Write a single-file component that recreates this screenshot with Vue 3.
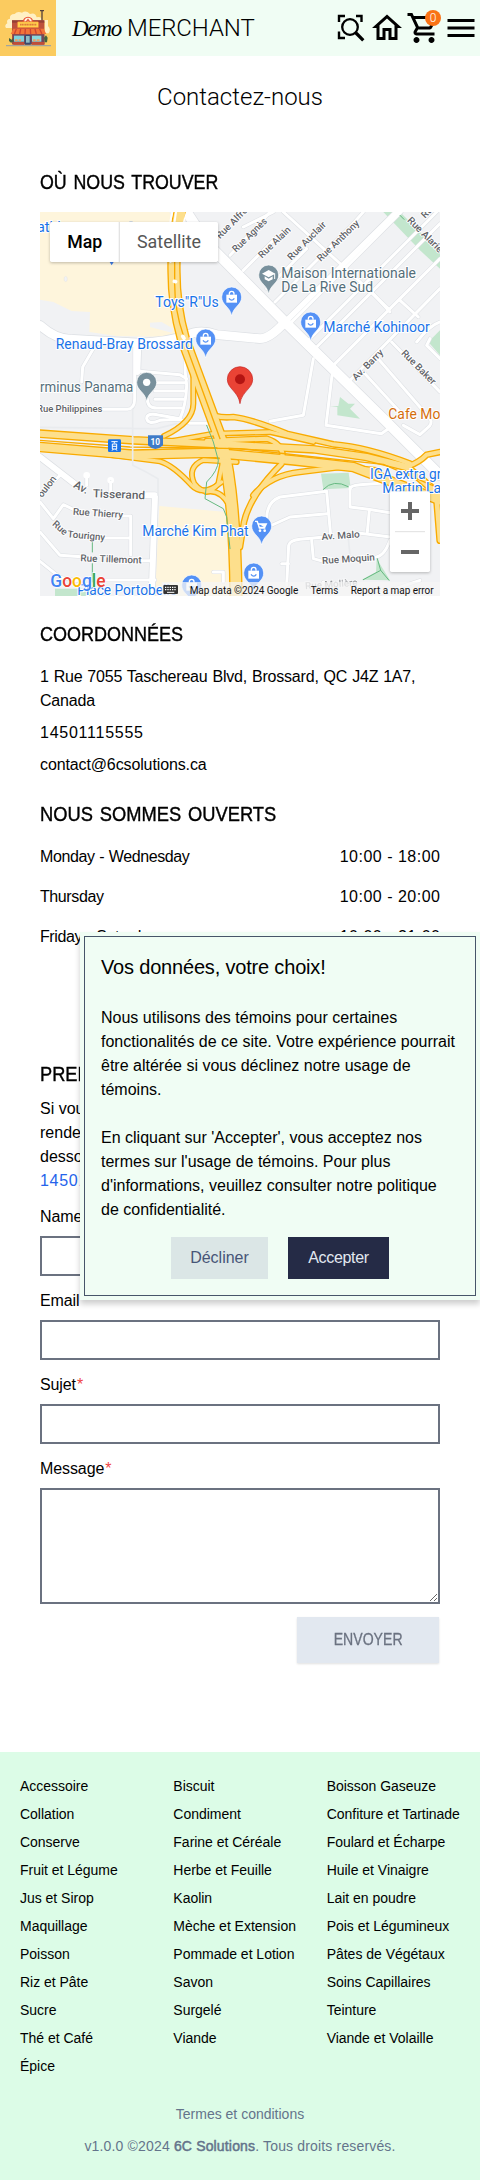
<script setup>
const hours = [
  { day: 'Monday - Wednesday', time: '10:00 - 18:00' },
  { day: 'Thursday', time: '10:00 - 20:00' },
  { day: 'Friday - Saturday', time: '10:00 - 21:00' },
]
const categories = [
  'Accessoire', 'Biscuit', 'Boisson Gaseuze',
  'Collation', 'Condiment', 'Confiture et Tartinade',
  'Conserve', 'Farine et Céréale', 'Foulard et Écharpe',
  'Fruit et Légume', 'Herbe et Feuille', 'Huile et Vinaigre',
  'Jus et Sirop', 'Kaolin', 'Lait en poudre',
  'Maquillage', 'Mèche et Extension', 'Pois et Légumineux',
  'Poisson', 'Pommade et Lotion', 'Pâtes de Végétaux',
  'Riz et Pâte', 'Savon', 'Soins Capillaires',
  'Sucre', 'Surgelé', 'Teinture',
  'Thé et Café', 'Viande', 'Viande et Volaille',
  'Épice',
]
const fields = ['Name', 'Email', 'Sujet']

// Map geometry, drawn on a 1200 x 1152 canvas
const minorRoads = [
  'M160 410 L128 465 L125 510',
  'M300 478 L420 488 L440 500', 'M340 512 H436', 'M345 537 H436', 'M345 562 H430',
  'M322 560 Q322 588 350 588 H425',
  'M435 440 Q434 480 440 520 Q438 580 420 620 L360 610 Q320 600 320 620 Q325 640 360 625 L420 622 L450 634 H505',
  'M190 592 H262 Q284 590 284 560 V400',
  'M0 870 L40 920 L70 878 L100 892', 'M250 912 H272 V1028', 'M190 978 H270', 'M0 960 L60 1030 L125 1034',
  'M0 1048 L60 1096 L110 1106', 'M190 1104 H345', 'M300 1046 H330',
  'M60 790 L0 850', 'M140 820 V790', 'M212 840 V810',
  'M820 440 L790 610 L690 628', 'M876 490 L858 640 L1024 665 L1045 650',
  'M680 920 Q680 870 720 855 L860 838 L872 970', 'M690 942 L750 915 L862 905',
  'M740 1120 L746 1000 Q750 985 780 982 L845 976', 'M815 985 L820 1040 L850 1048', 'M725 1055 H745',
  'M930 825 V885 L985 892 L1050 902', 'M930 832 Q930 820 960 818 L1040 812', 'M988 895 L982 960',
  'M960 964 L1052 975', 'M1000 1035 Q1030 1040 1050 985',
  'M610 175 L710 75', 'M680 230 L800 110', 'M705 270 L930 45 L970 0',
  'M570 130 L690 0', 'M750 335 L1084 0', 'M805 385 L1190 0', 'M830 405 L1200 35', 'M880 460 L1200 140',
  'M925 510 L1200 230', 'M700 0 L610 45', 'M1170 380 L1160 400 L1200 440', 'M1200 330 Q1170 340 1130 390',
  'M730 0 L950 200 L1045 290', 'M990 235 L1050 300', 'M1080 265 L1135 315',
  'M1055 390 L1200 540', 'M1010 435 L1170 620 Q1180 635 1160 650 L1140 668 L1090 640', 'M970 480 L1080 600',
  'M840 1152 L850 1110', 'M1000 1152 L1140 1105', 'M520 1080 H550 V1110',
]
const majorRoads = [
  { d: 'M0 340 Q50 385 100 382 L300 393 Q380 390 440 370 Q480 350 530 368 L660 380 Q690 380 735 330', w: 26 },
  { d: 'M440 0 L500 92 L735 330 L1025 615 L1200 790', w: 30 },
  { d: 'M295 395 L292 480', w: 18 },
  { d: 'M0 735 L110 820 M320 850 H345 L335 1152', w: 18 },
  { d: 'M735 330 L1090 -20', w: 16 },
]
const highways = [
  { d: 'M420 0 Q400 90 402 180 Q402 280 430 380 L545 690 Q585 850 588 1152', w: 34 },
  { d: 'M0 665 L280 685 L600 700 L820 712 L980 735 L1100 765 L1200 850', w: 20 },
  { d: 'M0 705 L280 728 L520 722 L760 745 L940 765 L1200 865', w: 26 },
  { d: 'M172 724 L360 748 Q400 760 455 820 Q490 855 545 810', w: 12 },
  { d: 'M372 672 Q460 630 460 575 V470', w: 12 },
  { d: 'M380 690 L520 665 L690 660 L820 690', w: 12 },
  { d: 'M510 600 Q525 620 580 615 Q630 620 740 665 L880 697 Q980 705 1110 755', w: 14 },
  { d: 'M500 687 L680 680 Q740 700 725 755 Q630 850 612 930 L600 1005', w: 14 },
  { d: 'M590 750 L490 744 Q440 765 463 815 Q500 860 535 815 L548 750', w: 12 },
  { d: 'M498 840 Q540 830 568 880', w: 12 },
  { d: 'M640 850 Q690 790 780 780 L900 765 L1010 775', w: 14 },
  { d: 'M1100 765 Q1140 750 1160 728 L1200 720', w: 14 },
  { d: 'M1190 860 L1200 985', w: 16 },
]
const streetLabels = [
  { t: 'Rue Alfred', x: 540, y: 82, r: -45, w: 0 },
  { t: 'Rue Agnès', x: 588, y: 122, r: -44, w: 132 },
  { t: 'Rue Alain', x: 666, y: 140, r: -44, w: 122 },
  { t: 'Rue Auclair', x: 754, y: 146, r: -45, w: 150 },
  { t: 'Rue Anthony', x: 842, y: 150, r: -44, w: 164 },
  { t: 'Rue Alarie', x: 1100, y: 26, r: 45, w: 138 },
  { t: 'Rue', x: 1155, y: 20, r: -45, w: 0 },
  { t: 'Av. Barry', x: 948, y: 507, r: -45, w: 118 },
  { t: 'Rue Baker', x: 1082, y: 425, r: 45, w: 134 },
  { t: 'Rue Philippines', x: -9, y: 600, r: 0, w: 196 },
  { t: 'Rue Thierry', x: 98, y: 908, r: 4, w: 151 },
  { t: 'Rue Tillemont', x: 121, y: 1048, r: 2, w: 184 },
  { t: 'Av. Malo', x: 845, y: 984, r: -4, w: 115 },
  { t: 'Rue Moquin', x: 847, y: 1056, r: -4, w: 158 },
  { t: 'oulon', x: 6, y: 858, r: -52, w: 0 },
]
const pins = [
  { x: 575, y: 255, kind: 'bag', c: '#5491f5' },
  { x: 497, y: 381, kind: 'bag', c: '#5491f5' },
  { x: 812, y: 330, kind: 'bag', c: '#5491f5' },
  { x: 641, y: 1083, kind: 'bag', c: '#5491f5' },
  { x: 455, y: 1119, kind: 'bag', c: '#5491f5' },
  { x: 665, y: 942, kind: 'cart', c: '#5491f5' },
  { x: 686, y: 189, kind: 'school', c: '#78909c' },
  { x: 320, y: 511, kind: 'dot', c: '#78909c' },
]
</script>

<template>
  <div class="page">
    <header class="topbar">
      <svg class="logo" viewBox="0 0 168 168">
        <rect width="168" height="168" fill="#fbcb5f" />
        <path d="M18 84 Q12 76 22 70 Q18 58 30 56 Q28 42 44 42 Q52 32 66 38 Q78 30 90 42 Q106 36 110 52 Q124 48 126 60 H144 V78 Q154 88 146 100 H134 V66 H38 V84 Z" fill="#fff0c4" />
        <path d="M120 32 H132 M126 33 V64" stroke="#54413b" stroke-width="4" />
        <rect x="36" y="61" width="97" height="72" fill="#bd503c" />
        <rect x="36" y="61" width="97" height="7" fill="#943f36" />
        <circle cx="84" cy="66" r="16" fill="#eb5035" /><circle cx="84" cy="64" r="11" fill="#fff3df" />
        <path d="M77 68 l7-9 7 9" stroke="#e05535" stroke-width="4" fill="none" />
        <rect x="52" y="65" width="64" height="18" rx="3" fill="#ffd14d" stroke="#e96a31" stroke-width="2" />
        <path d="M60 74 H109" stroke="#de7c3b" stroke-width="5" stroke-dasharray="4 1" />
        <path d="M40 86 H131 L139 102 H32 Z" fill="#f27338" />
        <path d="M49 87 L43 102 M62 87 L59 102 M76 87 L75 102 M91 87 L92 102 M105 87 L109 102 M119 87 L126 102" stroke="#cf4430" stroke-width="4" />
        <rect x="38" y="103" width="95" height="30" fill="#74485a" />
        <rect x="42" y="107" width="30" height="18" fill="#7ed1dc" /><rect x="96" y="107" width="28" height="18" fill="#8bd8de" />
        <path d="M45 121 h8 m3 0 h7 M99 121 h8 m3 0 h9" stroke="#ed9f63" stroke-width="6" />
        <rect x="75" y="105" width="17" height="29" fill="#384a70" /><rect x="78" y="108" width="11" height="20" fill="#8fbbc4" />
        <path d="M27 114 l8 5 5-6 v12 l-7 3 -6-5 Z M132 113 l6-7 5 7 -2 14 h-7 Z" fill="#436241" />
        <path d="M40 126 H72 V134 H40 Z M96 126 H133 V134 H96 Z" fill="#c04c38" />
        <path d="M18 135 H153 V139 H18 Z" fill="#a2a59d" />
      </svg>
      <div class="brand"><span class="script">Demo</span><span class="merchant">MERCHANT</span></div>
      <nav class="actions">
        <svg class="icon" viewBox="0 0 36 36" fill="none" stroke="#000">
          <path d="M7 12V6H13 M24 6H29.5V12 M7 21.5V28H13" stroke-width="2.4" />
          <circle cx="18" cy="17" r="7.8" stroke-width="2.3" />
          <path d="M23.5 22.5 L31.3 30.3" stroke-width="3.3" />
        </svg>
        <svg class="icon" viewBox="0 0 24 24"><path d="M12 5.69l5 4.5V18h-2v-6H9v6H7v-7.81l5-4.5M12 3L2 12h3v8h6v-6h2v6h6v-8h3L12 3z" /></svg>
        <div class="cart">
          <svg class="icon" viewBox="0 0 24 24"><path d="M15.55 13c.75 0 1.41-.41 1.75-1.03l3.58-6.49c.37-.66-.11-1.48-.87-1.48H5.21l-.94-2H1v2h2l3.6 7.59-1.35 2.44C4.52 15.37 5.48 17 7 17h12v-2H7l1.1-2h7.45zM6.16 6h12.15l-2.76 5H8.53L6.16 6zM7 18c-1.1 0-1.99.9-1.99 2S5.9 22 7 22s2-.9 2-2-.9-2-2-2zm10 0c-1.1 0-1.99.9-1.99 2s.89 2 1.99 2 2-.9 2-2-.9-2-2-2z" /></svg>
          <span class="badge">0</span>
        </div>
        <svg class="icon" viewBox="0 0 24 24"><path d="M3 18h18v-2H3v2zm0-5h18v-2H3v2zm0-7v2h18V6H3z" /></svg>
      </nav>
    </header>

    <main class="content">
      <h1>Contactez-nous</h1>

      <h2 class="h-where">OÙ NOUS TROUVER</h2>
      <svg class="map" viewBox="0 0 1200 1152">
        <rect width="1200" height="1152" fill="#f1f2f4" />
        <path d="M0 0 H388 L415 60 V375 L230 372 L148 360 L150 300 L95 297 L40 270 L0 263 Z" fill="#fef5dc" />
        <path d="M358 882 L560 900 L572 1152 H345 Z" fill="#fef5dc" />
        <path d="M330 332 L365 330 L400 350 L395 362 L330 345 Z" fill="#f1f2f4" />
        <ellipse cx="77" cy="201" rx="5" ry="8" fill="#f1f2f4" stroke="#ddd" />
        <g fill="#c3e6cd">
          <path d="M1030 0 H1080 L1200 120 V170 L1140 115 Z" /><path d="M1165 390 L1200 355 V430 Z" />
          <path d="M900 555 L925 575 L945 575 L930 590 L960 620 L892 610 L892 585 L870 582 H895 Z" />
          <path d="M843 785 L926 782 L932 828 L850 832 Z" /><path d="M1010 1040 L1050 1105 L965 1103 L1008 1080 Z" /><path d="M45 1130 H165 V1152 H45 Z" />
        </g>
        <g fill="none" stroke-linecap="round" stroke-linejoin="round">
          <path v-for="d in minorRoads" :key="'a' + d" :d="d" stroke="#dcdfe3" stroke-width="12" />
          <path v-for="r in majorRoads" :key="'b' + r.d" :d="r.d" stroke="#dcdfe3" :stroke-width="r.w + 4" />
          <path v-for="d in minorRoads" :key="'c' + d" :d="d" stroke="#fff" stroke-width="9" />
          <path v-for="r in majorRoads" :key="'d' + r.d" :d="r.d" stroke="#fff" :stroke-width="r.w" />
          <circle cx="140" cy="790" r="6" stroke="#fff" stroke-width="8" /><circle cx="212" cy="805" r="6" stroke="#fff" stroke-width="8" />
          <path v-for="r in highways" :key="'e' + r.d" :d="r.d" stroke="#f9ab00" :stroke-width="r.w + 6" />
          <path v-for="r in highways" :key="'f' + r.d" :d="r.d" stroke="#fddf8c" :stroke-width="r.w - 2" />
          <path d="M404 150 V200 Q402 290 430 370 M438 400 L540 680 M0 685 L270 705 L600 710 L850 738 L1030 757 L1200 830" stroke="#f9ab00" stroke-width="4" />
          <path d="M0 646 L350 650 L410 635 M278 592 V760 Q320 780 354 800 V850 M925 980 L930 1030" stroke="#e9ebee" stroke-width="5" />
          <path d="M397 0 Q380 70 392 150 M408 0 L403 35 M441 0 L430 35" stroke="#fff" stroke-width="6" />
          <path d="M403 208 l4 1 M428 373 l4 6" stroke="#fff" stroke-width="11" />
          <path d="M500 640 L520 690 L535 745 Q535 775 500 810 L495 860 L550 890 L560 915 L570 1010 M157 985 V1020 M157 1055 V1110 M850 832 Q880 800 925 824 M970 1103 L1022 1075 L1012 1040 M1022 1075 L1047 1105 M1080 10 L1092 22" stroke="#66b981" stroke-width="3" />
        </g>

        <g class="street">
          <text v-for="s in streetLabels" :key="s.t + s.x" :x="s.x" :y="s.y" :transform="`rotate(${s.r} ${s.x} ${s.y})`" :textLength="s.w || null" lengthAdjust="spacingAndGlyphs">{{ s.t }}</text>
          <text x="35" y="938" transform="rotate(42 35 938)">Rue</text>
          <text x="82" y="976" transform="rotate(5 82 976)" textLength="113" lengthAdjust="spacingAndGlyphs">Tourigny</text>
          <text x="98" y="825" class="avenue" transform="rotate(28 98 825)">Av.</text>
          <text x="158" y="856" class="avenue" transform="rotate(2 158 856)" textLength="157" lengthAdjust="spacingAndGlyphs">Tisserand</text>
          <text x="796" y="1132" transform="rotate(-4 796 1132)" textLength="158" opacity=".6" lengthAdjust="spacingAndGlyphs">Rue Molière</text>
        </g>

        <g v-for="p in pins" :key="p.x" :transform="`translate(${p.x} ${p.y})`">
          <path d="M0 57 C-5 28-30 25-30 0 A30 30 0 0 1 30 0 C30 25 5 28 0 57 Z" :fill="p.c" stroke="#fff" stroke-width="2" />
          <g v-if="p.kind === 'bag'">
            <path d="M-16-7 H16 V17 H-16 Z" fill="#fff" /><path d="M-7-7 V-10 A7 7 0 0 1 7-10 V-7" fill="none" stroke="#fff" stroke-width="4" />
            <path d="M-8 4 Q0 15 8 4" fill="none" :stroke="p.c" stroke-width="4" />
          </g>
          <g v-else-if="p.kind === 'cart'">
            <path d="M-20-14 H-13 L-7 6 H11 M-11-6 H14 L9 4 H-7 Z" fill="#fff" stroke="#fff" stroke-width="4" /><circle cx="-5" cy="14" r="4" fill="#fff" /><circle cx="9" cy="14" r="4" fill="#fff" />
          </g>
          <g v-else-if="p.kind === 'school'">
            <path d="M-20-4 L0-15 L20-4 L0 7 Z M-12 4 L0 11 L12 4 V13 L0 19 L-12 13 Z" fill="#fff" /><path d="M18-4 V12" stroke="#fff" stroke-width="3" />
          </g>
          <circle v-else r="11" fill="#fff" />
        </g>
        <g>
          <path d="M600 575 C595 538 562 530 562 502 A38 38 0 0 1 638 502 C638 530 605 538 600 575 Z" fill="#ea4335" stroke="#c5221f" stroke-width="2" />
          <circle cx="600" cy="502" r="15" fill="#b31412" />
        </g>
        <path d="M324 670 H369 V700 Q346 722 324 700 Z" fill="#3f7bc8" />
        <text x="346" y="699" class="shield">10</text>
        <rect x="204" y="682" width="39" height="38" rx="4" fill="#1a73e8" />
        <path d="M214 689 H233 M223 689 V694 M217 696 H230 V711 H217 Z M217 703 H230 M216 716 L220 711 M231 716 L227 711" fill="none" stroke="#fff" stroke-width="3" />

        <g class="poi">
          <text x="346" y="285" textLength="190" lengthAdjust="spacingAndGlyphs">Toys"R"Us</text>
          <text x="47" y="411" textLength="412" lengthAdjust="spacingAndGlyphs">Renaud-Bray Brossard</text>
          <text x="850" y="360" textLength="319" lengthAdjust="spacingAndGlyphs">Marché Kohinoor</text>
          <text x="307" y="972" textLength="319" lengthAdjust="spacingAndGlyphs">Marché Kim Phat</text>
          <text x="990" y="802" textLength="214" lengthAdjust="spacingAndGlyphs">IGA extra gr</text>
          <text x="1027" y="843" textLength="176" lengthAdjust="spacingAndGlyphs">Martin La</text>
          <text x="112" y="1149" textLength="300" lengthAdjust="spacingAndGlyphs">Place Portobello</text>
          <text x="-9" y="60">athl</text>
          <path d="M209 150 H221 L215 160 Z M268 29 h10 v3 h-10 Z" fill="#3f7de8" />
          <g class="grey">
            <text x="724" y="199" textLength="404" lengthAdjust="spacingAndGlyphs">Maison Internationale</text>
            <text x="724" y="240" textLength="275" lengthAdjust="spacingAndGlyphs">De La Rive Sud</text>
            <text x="0" y="540" textLength="280" lengthAdjust="spacingAndGlyphs">rminus Panama</text>
          </g>
          <text class="orange" x="1045" y="621" textLength="156" lengthAdjust="spacingAndGlyphs">Cafe Mo</text>
        </g>

        <text x="31" y="1126" class="google" textLength="166" lengthAdjust="spacingAndGlyphs"><tspan fill="#4285f4">G</tspan><tspan fill="#ea4335">o</tspan><tspan fill="#fbbc04">o</tspan><tspan fill="#4285f4">g</tspan><tspan fill="#34a853">l</tspan><tspan fill="#ea4335">e</tspan></text>

        <path d="M365 1110 H1200 V1152 H365 Z" fill="#f5f5f5" opacity=".75" />
        <rect x="370" y="1119" width="44" height="27" rx="3" fill="#333" />
        <path d="M375 1126 H410 M375 1133 H410" stroke="#fff" stroke-width="4" stroke-dasharray="4 3" /><path d="M381 1141 H403" stroke="#fff" stroke-width="3" />
        <g class="legal">
          <text x="449" y="1145" textLength="326" lengthAdjust="spacingAndGlyphs">Map data ©2024 Google</text>
          <text x="812" y="1145" textLength="83" lengthAdjust="spacingAndGlyphs">Terms</text>
          <text x="932" y="1145" textLength="249" lengthAdjust="spacingAndGlyphs">Report a map error</text>
        </g>

        <g class="control">
          <rect x="30" y="30" width="504" height="120" rx="5" fill="#fff" />
          <rect x="1050" y="838" width="120" height="242" rx="5" fill="#fff" />
        </g>
        <path d="M238 30 V150" stroke="#e3e3e3" stroke-width="4" />
        <text x="82" y="108" class="mode active" textLength="105" lengthAdjust="spacingAndGlyphs">Map</text>
        <text x="291" y="108" class="mode" textLength="192" lengthAdjust="spacingAndGlyphs">Satellite</text>
        <path d="M1065 959 H1155" stroke="#e0e0e0" stroke-width="3" />
        <path d="M1083 897 H1137 M1110 870 V924 M1083 1020 H1137" stroke="#666" stroke-width="12" />
      </svg>

      <h2 class="h-contact">COORDONNÉES</h2>
      <p class="address">1 Rue 7055 Taschereau Blvd, Brossard, QC J4Z 1A7,<br>Canada</p>
      <p class="phone">14501115555</p>
      <p class="mail">contact@6csolutions.ca</p>

      <h2 class="h-open">NOUS SOMMES OUVERTS</h2>
      <div class="hours">
        <div v-for="h in hours" :key="h.day" class="slot"><span class="day">{{ h.day }}</span><span class="time">{{ h.time }}</span></div>
      </div>

      <h2 class="h-book">PRENEZ RENDEZ-VOUS</h2>
      <p class="intro">Si vous souhaitez prendre un<br>rendez-vous, remplissez le formulaire ci-<br>dessous ou appelez-nous au<br><a>14501115555</a></p>

      <form>
        <label v-for="f in fields" :key="f" class="field"><span>{{ f }}<i>*</i></span><input type="text"></label>
        <label class="field"><span>Message<i>*</i></span><textarea></textarea></label>
        <button type="button" class="send"><span>ENVOYER</span></button>
      </form>
    </main>

    <footer>
      <div class="categories"><a v-for="c in categories" :key="c">{{ c }}</a></div>
      <p class="terms">Termes et conditions</p>
      <p class="copyright">v1.0.0 ©2024 <b>6C Solutions</b>. Tous droits reservés.</p>
    </footer>

    <aside class="consent">
      <div class="frame">
        <h3>Vos données, votre choix!</h3>
        <p>Nous utilisons des témoins pour certaines<br>fonctionalités de ce site. Votre expérience pourrait<br>être altérée si vous déclinez notre usage de<br>témoins.</p>
        <p>En cliquant sur 'Accepter', vous acceptez nos<br>termes sur l'usage de témoins. Pour plus<br>d'informations, veuillez consulter notre politique<br>de confidentialité.</p>
        <div class="choices"><button type="button" class="decline">Décliner</button><button type="button" class="accept">Accepter</button></div>
      </div>
    </aside>
  </div>
</template>

<style>
body { margin: 0; background: #fff; }
</style>

<style scoped>
* { box-sizing: border-box; }
.page { position: relative; width: 480px; height: 2180px; overflow: hidden; display: flex; flex-direction: column; font: 16px/24px "Liberation Sans", Arial, sans-serif; color: #000; }
h1, h2, h3, p { margin: 0; font-weight: 400; }
.topbar { height: 56px; flex: none; display: flex; align-items: center; background: #f0fdf4; }
.logo { width: 56px; height: 56px; flex: none; }
.brand { display: flex; align-items: baseline; margin-left: 16px; font-family: Roboto, sans-serif; font-weight: 300; font-size: 24px; line-height: 32px; }
.script { width: 55px; font: italic 400 23px/32px "Liberation Serif", serif; letter-spacing: -1.6px; }
.merchant { letter-spacing: -.1px; }
.actions { margin-left: auto; margin-right: 1px; display: flex; gap: 1px; }
.icon { width: 36px; height: 36px; display: block; }
.cart { position: relative; }
.badge { position: absolute; left: 19px; top: 0; width: 16px; height: 16px; border-radius: 50%; background: #f97316; color: #fff; font: 300 12px/16px Roboto, sans-serif; text-align: center; }
.content { padding: 0 40px; flex: 1; display: flex; flex-direction: column; }
h1 { margin-top: 25px; text-align: center; font: 300 24px/32px Roboto, sans-serif; }
h2 { font-size: 20px; line-height: 28px; -webkit-text-stroke: .4px #000; white-space: nowrap; transform-origin: left center; }
.h-where { margin-top: 55px; transform: scaleX(.89); word-spacing: 2px; }
.map { width: 400px; height: 384px; margin-top: 16px; flex: none; font-family: Roboto, sans-serif; }
.h-contact { margin-top: 24px; transform: scaleX(.9); }
.address { margin-top: 17px; letter-spacing: -.2px; word-spacing: .7px; white-space: nowrap; }
.phone, .mail { margin-top: 8px; }
.phone { letter-spacing: .75px; }
.mail { letter-spacing: -.12px; }
.h-open { margin-top: 23px; transform: scaleX(.915); word-spacing: 2px; }
.hours { margin-top: 9px; height: 223px; }
.slot { height: 40px; display: flex; justify-content: space-between; align-items: center; }
.day { letter-spacing: -.4px; word-spacing: .6px; }
.time { letter-spacing: .5px; margin-right: -.5px; }
.h-book { transform: scaleX(.91); }
.intro { margin-top: 9px; }
.intro a { color: #2563eb; letter-spacing: .7px; }
form { display: flex; flex-direction: column; margin-top: 12px; }
.field { display: flex; flex-direction: column; margin-bottom: 12px; }
.field span { height: 31px; letter-spacing: -.1px; }
.field i { font-style: normal; color: #ef4444; margin-left: 1px; }
input, textarea { display: block; width: 400px; height: 40px; margin: 0; padding: 8px; border: 2px solid #6b7280; border-radius: 0; background: #fff; outline: 0; }
.field input { margin-bottom: 1px; }
textarea { height: 116px; resize: vertical; }
button { border: 0; padding: 0; font: inherit; }
.send { align-self: flex-end; margin-right: 1px; margin-top: 1px; width: 142px; height: 46px; background: #e2e8f0; color: #6b7280; -webkit-text-stroke: .3px #6b7280; box-shadow: 0 1px 2px rgba(0, 0, 0, .12); }
.send span { display: inline-block; transform: scaleX(.88); }
footer { height: 428px; flex: none; background: #dcfce7; padding: 20px 0 0; font-size: 14px; line-height: 28px; }
.categories { padding-left: 20px; display: grid; grid-template-columns: repeat(3, 153.33px); white-space: nowrap; letter-spacing: -.02px; }
.terms, .copyright { text-align: center; color: #64748b; line-height: 32px; }
.terms { margin-top: 18px; }
.copyright { letter-spacing: .16px; }
.copyright b { font-weight: 400; -webkit-text-stroke: .5px #64748b; }
.consent { position: absolute; right: 0; top: 932px; width: 400px; height: 368px; padding: 4px; background: #f0fdf4; box-shadow: 0 4px 6px rgba(0, 0, 0, .2); }
.frame { height: 360px; border: 1px solid #475569; padding: 16px; }
h3 { font-size: 20px; line-height: 28px; margin-bottom: 25px; letter-spacing: -.18px; }
.frame p { margin-bottom: 24px; white-space: nowrap; }
.choices { display: flex; justify-content: center; gap: 20px; margin-top: -9px; }
.choices button { height: 42px; }
.decline { width: 97px; background: #dbe6e6; color: #475577; }
.accept { width: 101px; background: #252b46; color: #e2e8f0; letter-spacing: -.3px; }
.street { font-size: 29px; fill: #5f6368; stroke: #fff; stroke-width: 5px; paint-order: stroke; font-weight: 500; }
.avenue { font-size: 34px; }
.poi { font-size: 43px; fill: #1a73e8; stroke: #fff; stroke-width: 6px; paint-order: stroke; }
.poi path { stroke: none; }
.grey { fill: #546e7a; }
.orange { fill: #d56e0c; }
.shield { font-size: 25px; font-weight: 700; fill: #fff; text-anchor: middle; }
.google { font: 500 54px Roboto, sans-serif; stroke: #fff; stroke-width: 4px; paint-order: stroke; }
.legal { font-size: 34px; fill: #111; }
.mode { font-size: 54px; fill: #565656; }
.active { font-weight: 500; fill: #000; }
.control { filter: drop-shadow(0 3px 5px rgba(0, 0, 0, .25)); }
</style>
